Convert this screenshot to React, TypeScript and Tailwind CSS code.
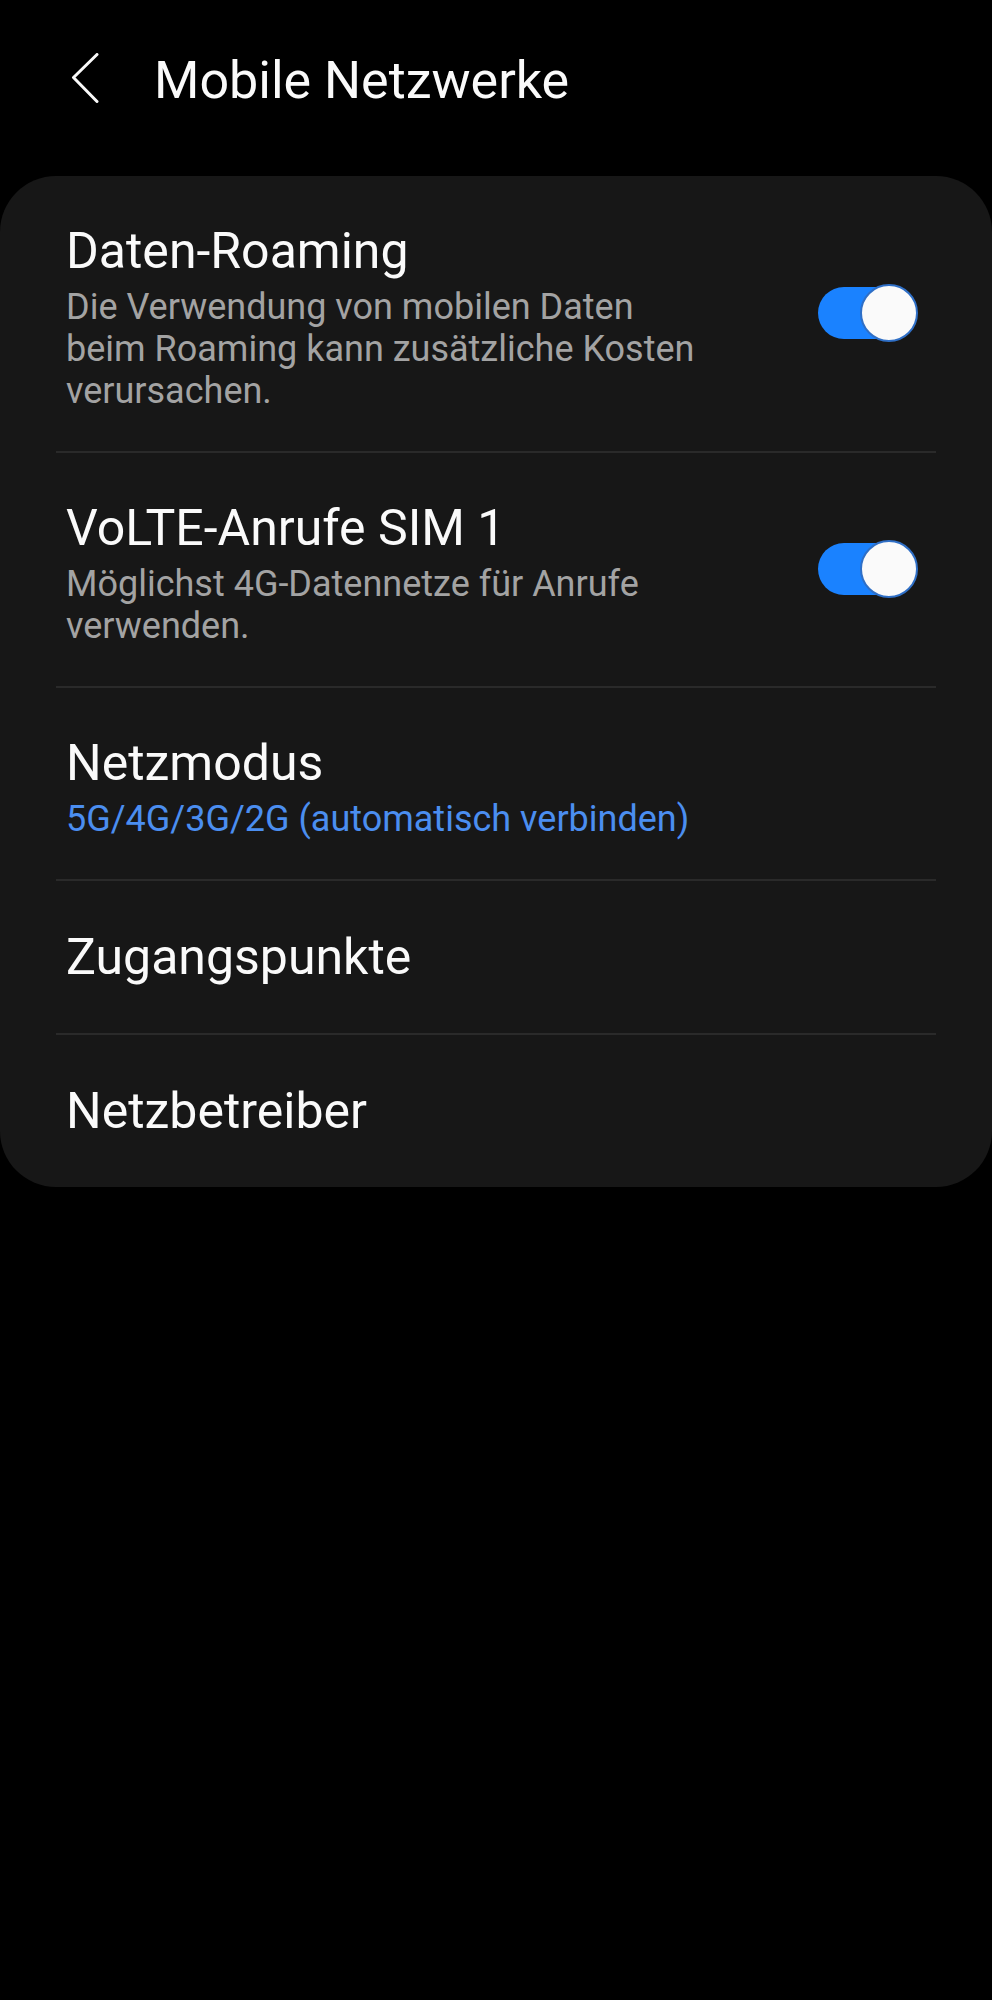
import React from "react";

const font = { fontFamily: "Roboto, 'Noto Sans', Arial, sans-serif" };

function Toggle() {
  return (
    <div className="relative mb-[9px] flex h-[60px] w-[100px] shrink-0 items-center">
      <div className="h-[52px] w-[90px] rounded-full bg-[#1a82ff]" />
      <div className="absolute right-0 top-1/2 h-[58px] w-[58px] -translate-y-1/2 rounded-full border-2 border-[#2f6fc6] bg-[#fafafa]" />
    </div>
  );
}

function Divider() {
  return <div className="mx-[56px] h-[2px] bg-[#2a2a2a]" />;
}

type RowProps = {
  title: string;
  lines?: string[];
  accent?: boolean;
  toggle?: boolean;
};

function Row({ title, lines, accent, toggle }: RowProps) {
  const hasSub = lines && lines.length > 0;
  return (
    <div
      className={
        hasSub
          ? "flex items-center pl-[66px] pr-[74px] pt-[47px] pb-[39px]"
          : "flex items-center pl-[66px] pr-[74px] py-[48px]"
      }
    >
      <div className="flex-1">
        <div className="text-[50px] leading-[56px] text-[#fafafa]">{title}</div>
        {hasSub && (
          <div
            className={
              accent
                ? "mt-[7px] text-[36px] leading-[42px] text-[#4b8ef0]"
                : "mt-[7px] text-[36px] leading-[42px] text-[#a3a3a3]"
            }
          >
            {lines!.map((l) => (
              <div key={l}>{l}</div>
            ))}
          </div>
        )}
      </div>
      {toggle && <Toggle />}
    </div>
  );
}

export default function App() {
  return (
    <div className="min-h-[2000px] w-full bg-black" style={font}>
      <header className="flex pl-[70px] pt-[56px]">
        <svg className="mt-[-3px] h-[50px] w-[30px]" viewBox="0 0 30 50" fill="none">
          <path
            d="M27 1.5 L3.5 24.5 L27 48.5"
            stroke="#fafafa"
            strokeWidth="3"
            strokeLinecap="round"
            strokeLinejoin="round"
          />
        </svg>
        <h1 className="ml-[54px] text-[52px] leading-[50px] text-[#fafafa]">Mobile Netzwerke</h1>
      </header>

      <section className="mt-[70px] rounded-[56px] bg-[#171717]">
        <Row
          title="Daten-Roaming"
          lines={[
            "Die Verwendung von mobilen Daten",
            "beim Roaming kann zusätzliche Kosten",
            "verursachen.",
          ]}
          toggle
        />
        <Divider />
        <Row
          title="VoLTE-Anrufe SIM 1"
          lines={["Möglichst 4G-Datennetze für Anrufe", "verwenden."]}
          toggle
        />
        <Divider />
        <Row title="Netzmodus" lines={["5G/4G/3G/2G (automatisch verbinden)"]} accent />
        <Divider />
        <Row title="Zugangspunkte" />
        <Divider />
        <Row title="Netzbetreiber" />
      </section>
    </div>
  );
}
